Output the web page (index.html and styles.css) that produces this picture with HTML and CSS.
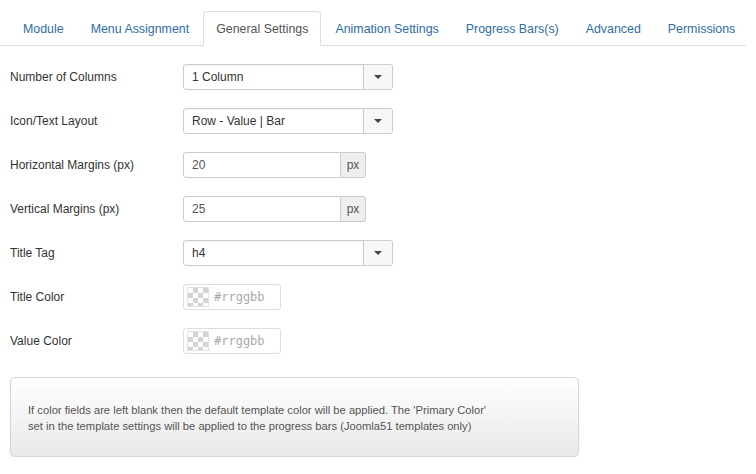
FILE: index.html
```html
<!DOCTYPE html>
<html>
<head>
<meta charset="utf-8">
<link rel="stylesheet" href="styles.css">
</head>
<body>
<ul class="tabs">
  <li class="tab"><a>Module</a></li>
  <li class="tab"><a>Menu Assignment</a></li>
  <li class="tab active"><a>General Settings</a></li>
  <li class="tab"><a>Animation Settings</a></li>
  <li class="tab"><a>Progress Bars(s)</a></li>
  <li class="tab"><a>Advanced</a></li>
  <li class="tab"><a>Permissions</a></li>
</ul>
<div class="form">
  <div class="row">
    <label class="label">Number of Columns</label>
    <div class="select"><span class="sel-text">1 Column</span><span class="caret-box"><span class="caret"></span></span></div>
  </div>
  <div class="row">
    <label class="label">Icon/Text Layout</label>
    <div class="select"><span class="sel-text">Row - Value | Bar</span><span class="caret-box"><span class="caret"></span></span></div>
  </div>
  <div class="row">
    <label class="label">Horizontal Margins (px)</label>
    <div class="append"><span class="input">20</span><span class="addon">px</span></div>
  </div>
  <div class="row">
    <label class="label">Vertical Margins (px)</label>
    <div class="append"><span class="input">25</span><span class="addon">px</span></div>
  </div>
  <div class="row">
    <label class="label">Title Tag</label>
    <div class="select"><span class="sel-text">h4</span><span class="caret-box"><span class="caret"></span></span></div>
  </div>
  <div class="row">
    <label class="label">Title Color</label>
    <div class="color"><span class="checker"></span><span class="hex">#rrggbb</span></div>
  </div>
  <div class="row">
    <label class="label">Value Color</label>
    <div class="color"><span class="checker"></span><span class="hex">#rrggbb</span></div>
  </div>
</div>
<div class="info">If color fields are left blank then the default template color will be applied. The 'Primary Color' set in the template settings will be applied to the progress bars (Joomla51 templates only)</div>
</body>
</html>
```
FILE: styles.css
```css
html, body {
  margin: 0;
  padding: 0;
  background: #fff;
  font-family: "Liberation Sans", Arial, sans-serif;
  font-size: 12px;
  color: #333;
}
.tabs {
  list-style: none;
  margin: 0;
  padding: 11px 0 0 10px;
  display: flex;
  border-bottom: 1px solid #ddd;
  width: 736px;
}
.tab {
  margin-right: 1px;
  margin-bottom: -1px;
  white-space: nowrap;
  flex: none;
}
.tab a {
  display: block;
  padding: 8px 12px 7px 12px;
  line-height: 18px;
  font-size: 12.4px;
  color: #2f6da8;
  border: 1px solid transparent;
  border-radius: 4px 4px 0 0;
}
.tab.active a {
  color: #555;
  background: #fff;
  border-color: #ddd #ddd transparent #ddd;
}
.form {
  padding: 18px 0 0 10px;
  display: flex;
  flex-direction: column;
  gap: 18px;
}
.row {
  display: flex;
  align-items: center;
  height: 26px;
}
.label {
  width: 173px;
  color: #333;
}
.select {
  width: 208px;
  height: 24px;
  border: 1px solid #ccc;
  border-radius: 3px;
  display: flex;
  box-shadow: inset 0 1px 1px rgba(0,0,0,0.05);
}
.sel-text {
  flex: 1;
  padding-left: 8px;
  line-height: 24px;
  color: #333;
}
.caret-box {
  width: 28px;
  border-left: 1px solid #ccc;
  background: #f7f7f7;
  display: flex;
  align-items: center;
  justify-content: center;
  border-radius: 0 3px 3px 0;
}
.caret {
  width: 0;
  height: 0;
  border-left: 4px solid transparent;
  border-right: 4px solid transparent;
  border-top: 4px solid #444;
}
.append {
  display: flex;
  height: 26px;
}
.input {
  width: 148px;
  height: 24px;
  line-height: 24px;
  padding-left: 8px;
  border: 1px solid #ccc;
  border-radius: 3px 0 0 3px;
  color: #555;
}
.addon {
  width: 24px;
  height: 24px;
  line-height: 24px;
  text-align: center;
  background: #eee;
  border: 1px solid #ccc;
  border-left: 0;
  border-radius: 0 3px 3px 0;
  color: #555;
}
.color {
  width: 96px;
  height: 24px;
  border: 1px solid #ddd;
  border-radius: 3px;
  display: flex;
  align-items: center;
}
.checker {
  width: 20px;
  height: 18px;
  margin-left: 3px;
  margin-right: 5px;
  background-color: #fff;
  background-image:
    linear-gradient(45deg, #d4d4d4 25%, transparent 25%, transparent 75%, #d4d4d4 75%),
    linear-gradient(45deg, #d4d4d4 25%, transparent 25%, transparent 75%, #d4d4d4 75%);
  background-size: 10px 10px;
  background-position: 0 0, 5px 5px;
  border: 1px solid #e2e2e2;
}
.hex {
  font-family: "DejaVu Sans Mono", "Liberation Mono", monospace;
  font-size: 12px;
  color: #aaa;
}
.info {
  margin: 23px 0 0 10px;
  width: 462px;
  padding: 24px 88px 22px 17px;
  line-height: 16px;
  font-size: 11.2px;
  color: #555;
  border: 1px solid #d6d6d6;
  border-radius: 5px;
  background: linear-gradient(#ffffff, #e9e9e9);
  box-shadow: 0 1px 2px rgba(0,0,0,0.08);
}
```
